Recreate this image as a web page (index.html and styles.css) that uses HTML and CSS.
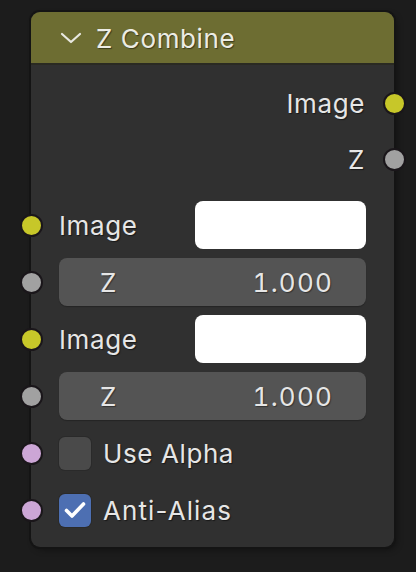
FILE: index.html
```html
<!DOCTYPE html>
<html>
<head>
<meta charset="utf-8">
<link rel="stylesheet" href="styles.css">
</head>
<body>
<div class="node">
  <div class="header">
    <svg class="chevron" width="22" height="14" viewBox="0 0 22 14"><polyline points="2,3 11,11 20,3" fill="none" stroke="#e8e8e0" stroke-width="2.2" stroke-linecap="round" stroke-linejoin="round"/></svg>
    <span class="title">Z Combine</span>
  </div>
  <div class="content">
    <div class="row out"><span class="label">Image</span><span class="socket right yellow"></span></div>
    <div class="row out"><span class="label">Z</span><span class="socket right gray"></span></div>
    <div class="inputs">
      <div class="row"><span class="socket left yellow"></span><span class="label grow">Image</span><span class="color"></span></div>
      <div class="row"><span class="socket left gray"></span><div class="field"><span>Z</span><span class="num">1.000</span></div></div>
      <div class="row"><span class="socket left yellow"></span><span class="label grow">Image</span><span class="color"></span></div>
      <div class="row"><span class="socket left gray"></span><div class="field"><span>Z</span><span class="num">1.000</span></div></div>
      <div class="row"><span class="socket left purple"></span><span class="check"></span><span class="label">Use Alpha</span></div>
      <div class="row"><span class="socket left purple"></span><span class="check on"><svg width="24" height="20" viewBox="0 0 24 20"><polyline points="3.5,10.5 9,16 20.5,4" fill="none" stroke="#ffffff" stroke-width="3.6" stroke-linecap="round" stroke-linejoin="round"/></svg></span><span class="label alias">Anti-Alias</span></div>
    </div>
  </div>
</div>
</body>
</html>
```
FILE: styles.css
```css
html, body {
  margin: 0;
  padding: 0;
  background: #1c1c1c;
  width: 416px;
  height: 572px;
  overflow: hidden;
}
body {
  padding: 12px 0 0 31px;
  box-sizing: border-box;
  font-family: Inter, "Noto Sans", sans-serif;
  font-size: 26px;
  letter-spacing: 0.6px;
  color: #e6e6e6;
}
.node {
  width: 363px;
  height: 535px;
  background: #303030;
  border-radius: 9px;
  box-shadow: 0 0 0 2px #141414, 3px 3px 6px rgba(0,0,0,0.35);
  display: flex;
  flex-direction: column;
}
.header {
  height: 51px;
  background: #6d6d32;
  border-radius: 9px 9px 0 0;
  border-bottom: 2px solid #2a2a22;
  display: flex;
  align-items: center;
  padding-left: 29px;
  gap: 14px;
}
.chevron { margin-top: 1px; }
.title {
  color: #ecece4;
  text-shadow: 1px 1px 1px rgba(0,0,0,0.45);
  margin-top: 1px;
}
.content {
  display: flex;
  flex-direction: column;
  padding-top: 14px;
  gap: 8px;
}
.inputs {
  display: flex;
  flex-direction: column;
  gap: 9px;
  margin-top: 10px;
}
.row {
  position: relative;
  height: 48px;
  display: flex;
  align-items: center;
  padding: 0 28px;
}
.row.out {
  justify-content: flex-end;
  padding-right: 29px;
}
.label {
  text-shadow: 1px 1px 1px rgba(0,0,0,0.5);
}
.alias { letter-spacing: 1.1px; }
.grow { flex: 1; }
.socket {
  position: absolute;
  top: 50%;
  width: 19px;
  height: 19px;
  margin-top: -11.5px;
  border-radius: 50%;
  border: 2px solid #1a161a;
}
.socket.left { left: -11.5px; }
.socket.right { right: -11.5px; }
.yellow { background: #c7c729; }
.gray { background: #a1a1a1; }
.purple { background: #cca6d6; }
.color {
  width: 171px;
  height: 48px;
  background: #ffffff;
  border-radius: 8px;
}
.field {
  flex: 1;
  height: 48px;
  background: #545454;
  border-radius: 8px;
  display: flex;
  justify-content: space-between;
  align-items: center;
  padding: 0 33px 0 41px;
  box-shadow: 0 1px 1px rgba(0,0,0,0.25);
}
.field span { text-shadow: 1px 1px 1px rgba(0,0,0,0.4); }
.num {
  font-variant-numeric: tabular-nums;
  letter-spacing: 1.2px;
}
.check {
  width: 32px;
  height: 33px;
  border-radius: 6px;
  background: #4a4a4a;
  box-shadow: 0 0 0 1px #2a2a2a;
  margin-right: 12px;
  display: flex;
  align-items: center;
  justify-content: center;
}
.check.on { background: #4d6fb2; }
```
